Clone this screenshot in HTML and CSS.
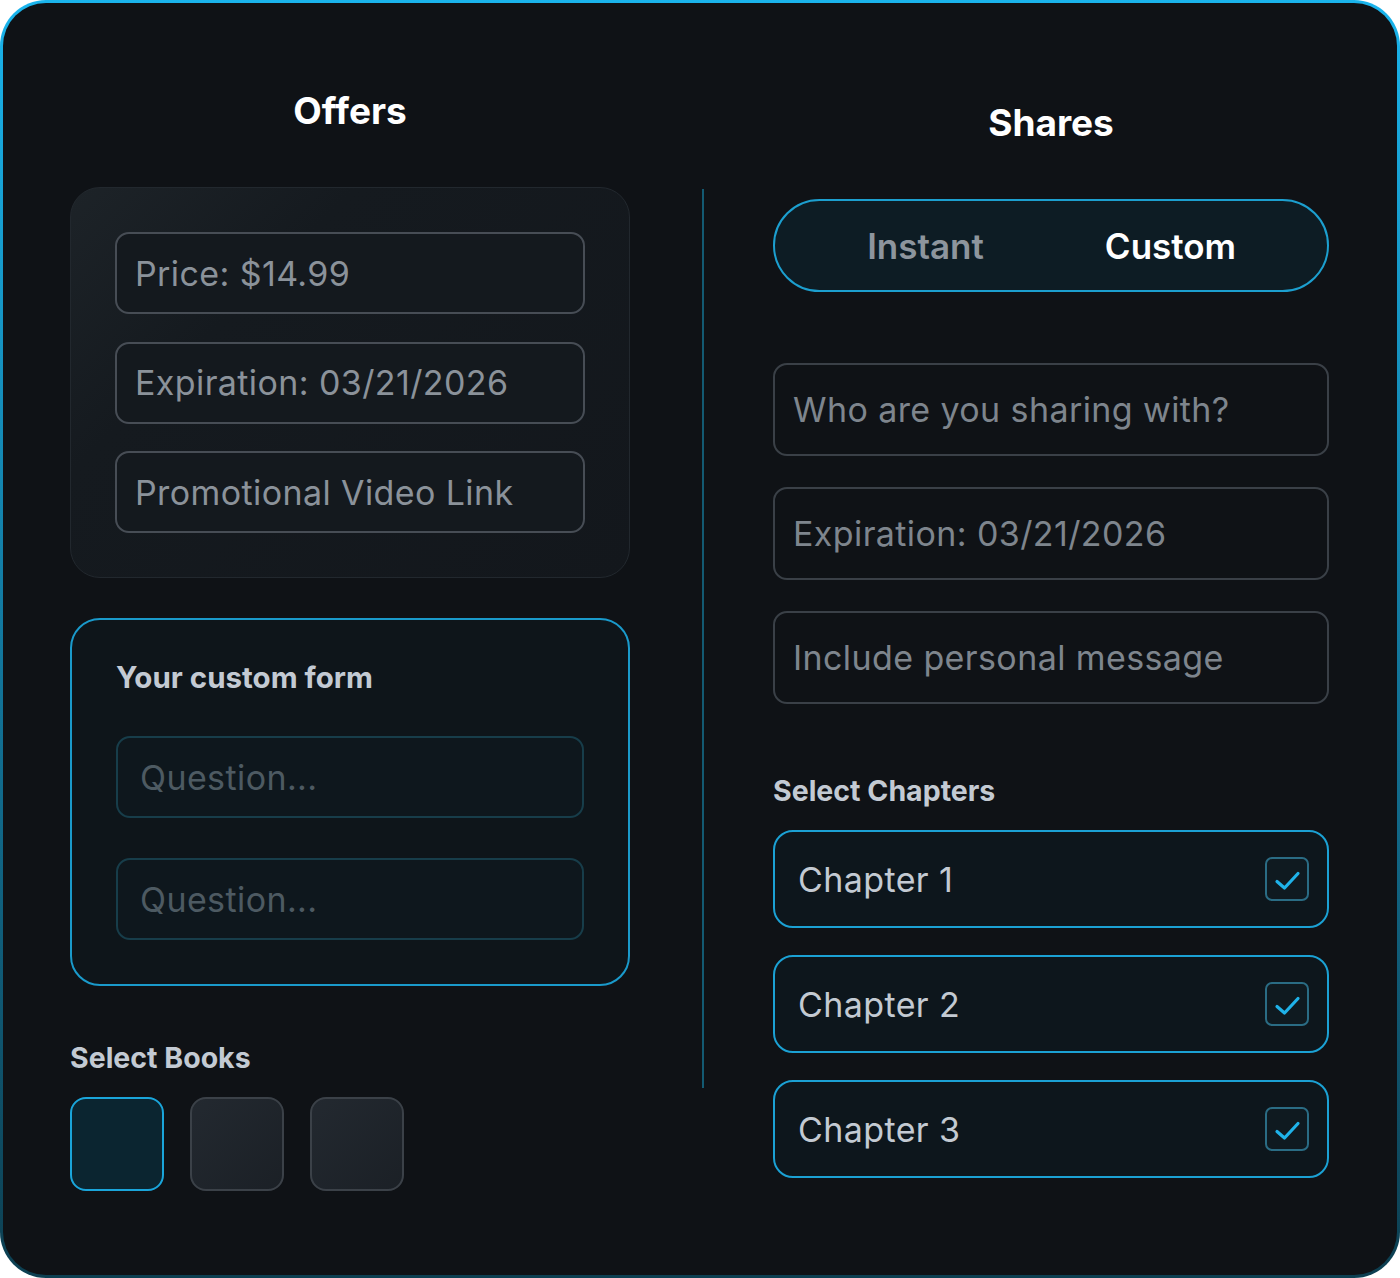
FILE: index.html
```html
<!DOCTYPE html>
<html lang="en">
<head>
    <meta charset="UTF-8">
    <meta name="viewport" content="width=device-width, initial-scale=1.0">
    <title>Offers &amp; Shares</title>
    <link rel="stylesheet" href="styles.css">
</head>
<body>
    <div class="frame">
        <div class="panel">
            <!-- left column: offers -->
            <section class="column column-offers">
                <h2 class="column-title">Offers</h2>

                <div class="offer-card">
                    <div class="field field-soft">Price: $14.99</div>
                    <div class="field field-soft">Expiration: 03/21/2026</div>
                    <div class="field field-soft">Promotional Video Link</div>
                </div>

                <div class="custom-form">
                    <h3 class="section-label form-label">Your custom form</h3>
                    <div class="field field-question">Question...</div>
                    <div class="field field-question">Question...</div>
                </div>

                <h3 class="section-label books-label">Select Books</h3>
                <div class="book-list">
                    <div class="book book-active"></div>
                    <div class="book"></div>
                    <div class="book"></div>
                </div>
            </section>

            <div class="divider"></div>

            <!-- right column: shares -->
            <section class="column column-shares">
                <h2 class="column-title">Shares</h2>

                <div class="toggle">
                    <span class="toggle-option">Instant</span>
                    <span class="toggle-option active">Custom</span>
                </div>

                <div class="share-fields">
                    <div class="field field-plain">Who are you sharing with?</div>
                    <div class="field field-plain">Expiration: 03/21/2026</div>
                    <div class="field field-plain">Include personal message</div>
                </div>

                <h3 class="section-label chapters-label">Select Chapters</h3>
                <div class="chapter-list">
                    <div class="chapter">
                        <span>Chapter 1</span>
                        <span class="check">
                            <svg viewBox="2 2 40 40" width="40" height="40"><path d="M12 24.5l7.5 6.5L33 16.5" fill="none" stroke="#1fb2e8" stroke-width="3.2" stroke-linecap="round" stroke-linejoin="round"/></svg>
                        </span>
                    </div>
                    <div class="chapter">
                        <span>Chapter 2</span>
                        <span class="check">
                            <svg viewBox="2 2 40 40" width="40" height="40"><path d="M12 24.5l7.5 6.5L33 16.5" fill="none" stroke="#1fb2e8" stroke-width="3.2" stroke-linecap="round" stroke-linejoin="round"/></svg>
                        </span>
                    </div>
                    <div class="chapter">
                        <span>Chapter 3</span>
                        <span class="check">
                            <svg viewBox="2 2 40 40" width="40" height="40"><path d="M12 24.5l7.5 6.5L33 16.5" fill="none" stroke="#1fb2e8" stroke-width="3.2" stroke-linecap="round" stroke-linejoin="round"/></svg>
                        </span>
                    </div>
                </div>
            </section>
        </div>
    </div>
</body>
</html>
```

FILE: styles.css
```css
/* base */
body {
    margin: 0;
    background: #ffffff;
    font-family: Inter, 'Noto Sans', sans-serif;
}

/* outer frame with a glowing edge */
.frame {
    width: 1400px;
    height: 1278px;
    box-sizing: border-box;
    padding: 3px;
    border-radius: 46px;
    background: linear-gradient(180deg, #1ab4ec 0%, #137ea6 45%, #0d3f51 100%);
}

.panel {
    height: 100%;
    border-radius: 43px;
    background: #0f1216;
    display: flex;
    padding-left: 67px;
    box-sizing: border-box;
}

.column {
    display: flex;
    flex-direction: column;
}

.column-offers {
    width: 560px;
    padding-top: 86px;
}

.column-shares {
    width: 556px;
    padding-top: 98px;
}

.column-title {
    margin: 0 0 54px;
    font-size: 37px;
    line-height: 44px;
    font-weight: 700;
    color: #ffffff;
    text-align: center;
}

.divider {
    width: 2px;
    margin: 186px 69px 0 72px;
    height: 899px;
    background: #135a72;
}

.section-label {
    margin: 0;
    font-size: 28.5px;
    line-height: 34px;
    font-weight: 700;
    color: #c3cad3;
}

/* text fields */
.field {
    box-sizing: border-box;
    height: 82px;
    border-radius: 14px;
    display: flex;
    align-items: center;
    padding: 0 18px;
    font-size: 34px;
    letter-spacing: 0.4px;
}

.field-soft {
    background: #14191e;
    border: 2px solid #474d55;
    color: #8b929a;
}

.field-question {
    background: #0e171d;
    border: 2px solid #173d4a;
    color: #4d5a62;
    padding-left: 22px;
}

.field-plain {
    height: 93px;
    background: #0f1216;
    border: 2px solid #3a4047;
    color: #7e858d;
}

/* offers card */
.offer-card {
    box-sizing: border-box;
    height: 391px;
    padding: 44px 44px;
    border-radius: 30px;
    border: 1px solid #22282e;
    background: linear-gradient(135deg, #1d2328 0%, #151a1f 30%, #13171c 100%);
    display: flex;
    flex-direction: column;
    justify-content: space-between;
}

.custom-form {
    box-sizing: border-box;
    margin-top: 40px;
    height: 368px;
    padding: 40px 44px 0;
    border-radius: 30px;
    border: 2px solid #1a9acb;
    background: #0e151a;
    display: flex;
    flex-direction: column;
}

.form-label {
    font-size: 29.5px;
    margin-bottom: 42px;
}

.custom-form .field + .field {
    margin-top: 40px;
}

.books-label {
    margin-top: 55px;
}

.book-list {
    display: flex;
    gap: 26px;
    margin-top: 22px;
}

.book {
    box-sizing: border-box;
    width: 94px;
    height: 94px;
    border-radius: 16px;
    border: 2px solid #3b4148;
    background: linear-gradient(135deg, #232930 0%, #1b2026 100%);
}

.book-active {
    border-color: #1aa5da;
    background: #0b2530;
}

/* shares toggle */
.toggle {
    box-sizing: border-box;
    height: 93px;
    border-radius: 47px;
    border: 2px solid #1c9fcf;
    background: #0d1c24;
    display: flex;
    padding: 0 34px 0 28px;
}

.toggle-option {
    flex: 1;
    display: flex;
    align-items: center;
    justify-content: center;
    font-size: 35px;
    font-weight: 600;
    color: #8d959d;
}

.toggle-option.active {
    color: #ffffff;
}

.share-fields {
    margin-top: 71px;
    display: flex;
    flex-direction: column;
    gap: 31px;
}

.chapters-label {
    margin-top: 70px;
}

.chapter-list {
    margin-top: 22px;
    display: flex;
    flex-direction: column;
    gap: 27px;
}

.chapter {
    box-sizing: border-box;
    height: 98px;
    border-radius: 20px;
    border: 2px solid #1ba1d4;
    background: #0d161c;
    display: flex;
    align-items: center;
    justify-content: space-between;
    padding: 0 18px 0 23px;
    font-size: 34px;
    letter-spacing: 0.4px;
    color: #c3cad2;
}

.check {
    box-sizing: border-box;
    width: 44px;
    height: 44px;
    border-radius: 7px;
    border: 2px solid #2a6c84;
    background: #0f1a20;
    display: flex;
    align-items: center;
    justify-content: center;
}
```
